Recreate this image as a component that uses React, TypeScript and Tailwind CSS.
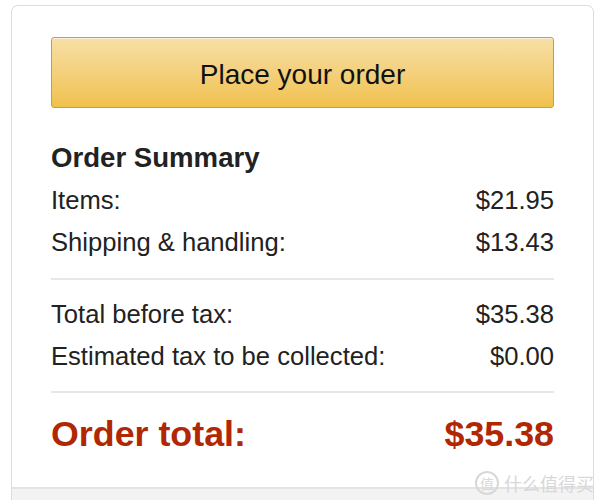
export default function App() {
  const rows1 = [
    { label: "Items:", value: "$21.95" },
    { label: "Shipping & handling:", value: "$13.43" },
  ];
  const rows2 = [
    { label: "Total before tax:", value: "$35.38" },
    { label: "Estimated tax to be collected:", value: "$0.00" },
  ];
  return (
    <div className="relative w-[600px] h-[500px] overflow-hidden bg-white pt-[5px] pl-[11px] pr-[6px] font-['Liberation_Sans',Arial,sans-serif] text-[#222]">
      <div className="border border-[#dddddd] border-b-0 rounded-t-[7px] h-[520px] flex flex-col">
        <div className="px-[39px] pt-[31px]">
          <button className="w-full h-[71px] pt-[5px] rounded-[3px] border border-[#c4a03f] bg-gradient-to-b from-[#f7dfa5] to-[#f0c14b] text-[28px] text-[#111] shadow-[inset_0_1px_0_rgba(255,255,255,0.6)]">
            Place your order
          </button>
          <h3 className="mt-[29px] text-[27.6px] font-bold leading-[42px] text-[#222]">Order Summary</h3>
          {rows1.map((r) => (
            <div key={r.label} className="flex justify-between text-[25.6px] leading-[42px]">
              <span>{r.label}</span>
              <span>{r.value}</span>
            </div>
          ))}
          <div className="mt-[15px] h-[2px] bg-[#e7e7e7]" />
          <div className="mt-[13px]">
            {rows2.map((r) => (
              <div key={r.label} className="flex justify-between text-[25.6px] leading-[42px]">
                <span>{r.label}</span>
                <span>{r.value}</span>
              </div>
            ))}
          </div>
          <div className="mt-[14px] h-[2px] bg-[#e7e7e7]" />
          <div className="mt-[17px] flex justify-between text-[35.8px] font-bold leading-[48px] text-[#b12704]">
            <span>Order total:</span>
            <span>$35.38</span>
          </div>
        </div>
        <div className="mt-[29px] flex-1 border-t-2 border-[#e3e3e3] bg-[#f3f3f3]" />
      </div>
      <div className="absolute right-[6px] bottom-[5px] flex items-center gap-[5px] text-[#d8d8d8] font-['Noto_Sans_CJK_SC',sans-serif]">
        <span className="w-[24px] h-[24px] rounded-full border-2 border-[#d8d8d8] flex items-center justify-center text-[14px] leading-none">值</span>
        <span className="text-[18px] leading-none">什么值得买</span>
      </div>
    </div>
  );
}
